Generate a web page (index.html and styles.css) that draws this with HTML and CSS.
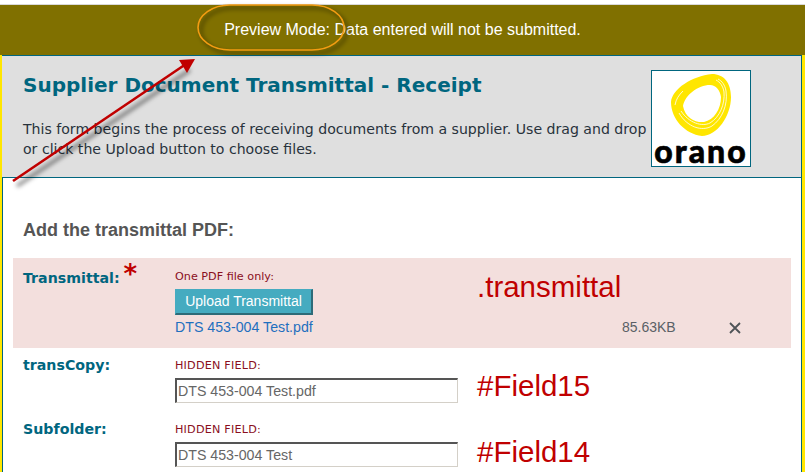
FILE: index.html
```html
<!DOCTYPE html>
<html lang="en">
<head>
  <meta charset="UTF-8">
  <title>Supplier Document Transmittal - Receipt</title>
  <link rel="stylesheet" href="styles.css">
</head>
<body>
  <div class="preview-bar">Preview Mode: Data entered will not be submitted.</div>
  <div class="form-wrap">
    <header class="form-header">
      <div class="header-text">
        <h1>Supplier Document Transmittal - Receipt</h1>
        <p>This form begins the process of receiving documents from a supplier. Use drag and drop or click the Upload button to choose files.</p>
      </div>
      <div class="logo">
        <svg class="logo-mark" viewBox="0 0 98 67" width="98" height="67">
          <path fill="#ffe600" fill-rule="evenodd" d="M19 31C20 18 40 5 60 3C72 3 79 12 79 26C79 45 65 65 50 65C33 63 19 48 19 31ZM31 35C33 47 44 52 52 51C62 49 69 38 69 26C68 19 64 14 58 14C46 14 33 24 31 35Z"/>
          <g fill="none" stroke="#fff" stroke-width=".8">
            <path d="M27 42C35 56 50 61 60 55C70 48 76 34 74 20C73 14 70 10 66 8"/>
            <path d="M29 40C37 52 50 56 58 52C68 46 73 33 72 21C71 15 68 11 64 9"/>
            <path d="M23 34C24 28 27 24 31 20"/>
          </g>
        </svg>
        <span class="logo-word">orano</span>
      </div>
    </header>

    <main class="form-body">
      <h2>Add the transmittal PDF:</h2>

      <div class="field-row transmittal">
        <div class="field-label">Transmittal:<span class="required">*</span></div>
        <div class="field-main">
          <div class="hint">One PDF file only:</div>
          <button class="upload-btn" type="button">Upload Transmittal</button>
          <div class="file-line">
            <a class="file-name" href="#">DTS 453-004 Test.pdf</a>
            <span class="file-size">85.63KB</span>
            <svg class="file-remove" viewBox="0 0 12 12" width="12" height="12" stroke="#4f5357" stroke-width="1.8" fill="none">
              <path d="M1 1L11 11M11 1L1 11"/>
            </svg>
          </div>
        </div>
      </div>

      <div class="field-row hidden-row">
        <div class="field-label">transCopy:</div>
        <div class="field-main">
          <div class="hint upper">HIDDEN FIELD:</div>
          <input class="text-input" type="text" value="DTS 453-004 Test.pdf">
        </div>
      </div>

      <div class="field-row hidden-row">
        <div class="field-label">Subfolder:</div>
        <div class="field-main">
          <div class="hint upper">HIDDEN FIELD:</div>
          <input class="text-input" type="text" value="DTS 453-004 Test">
        </div>
      </div>
    </main>
  </div>

  <!-- annotations drawn over the screenshot -->
  <div class="note note-transmittal">.transmittal</div>
  <div class="note note-field15">#Field15</div>
  <div class="note note-field14">#Field14</div>
  <svg class="markup" viewBox="0 0 805 472" width="805" height="472">
    <defs>
      <filter id="soft" x="-20%" y="-20%" width="140%" height="140%">
        <feGaussianBlur stdDeviation="2"/>
      </filter>
    </defs>
    <rect x="198" y="5" width="146" height="45" rx="32" ry="23" fill="none" stroke="#000" stroke-opacity=".35" stroke-width="3" filter="url(#soft)" transform="translate(3 3)"/>
    <rect x="198" y="5" width="146" height="45" rx="32" ry="23" fill="none" stroke="#f39c12" stroke-width="1.6"/>
    <path d="M17 186L190 70" stroke="#000" stroke-opacity=".45" stroke-width="3.5" filter="url(#soft)"/>
    <path d="M13 181L186 64" stroke="#c00000" stroke-width="2.6"/>
    <path d="M195 59L179 60L187 73Z" fill="#c00000"/>
  </svg>
</body>
</html>
```

FILE: styles.css
```css
* {
  box-sizing: border-box;
}

html, body {
  height: 472px;
  overflow: hidden;
}

body {
  margin: 0;
  background-color: #fff;
  font-family: "DejaVu Sans", Verdana, sans-serif;
  padding-top: 4px;
}

.preview-bar {
  height: 51px;
  padding-top: 15px;
  border-top: 1px solid #d9d9d9;
  background-color: #807000;
  color: #fff;
  font-family: "Liberation Sans", Arial, sans-serif;
  font-size: 16px;
  line-height: 19px;
  text-align: center;
}

.form-wrap {
  height: 417px;
  border-left: 2px solid #ffe600;
  border-right: 3px solid #ffe600;
  box-shadow: inset 1px 0 0 #00667f, inset -1px 0 0 #00667f;
}

.form-header {
  display: flex;
  justify-content: space-between;
  height: 123px;
  padding: 14px 50px 0 21px;
  background-color: #dfdfdf;
  border: 1px solid #00667f;
  border-width: 1px 1px 1px 0;
}

.header-text {
  width: 628px;
}

h1 {
  margin: 3px 0 0;
  color: #00667f;
  font-size: 20px;
  line-height: 24px;
}

.header-text p {
  margin: 22px 0 0;
  color: #28323c;
  font-size: 14.1px;
  line-height: 20px;
}

.logo {
  flex: none;
  width: 100px;
  height: 97px;
  background-color: #fff;
  border: 1px solid #00667f;
  text-align: center;
}

.logo-mark {
  display: block;
}

.logo-word {
  display: block;
  color: #000;
  font-family: "Lato", sans-serif;
  font-size: 32px;
  font-weight: 900;
  line-height: 26px;
  letter-spacing: 2px;
  -webkit-text-stroke: 0.6px #000;
}

.form-body {
  padding: 42px 0 0 11px;
}

h2 {
  margin: 0 0 18px 10px;
  color: #555;
  font-family: "Liberation Sans", Arial, sans-serif;
  font-size: 18px;
  font-weight: bold;
  line-height: 20px;
}

.field-row {
  display: flex;
  width: 778px;
  padding-left: 10px;
}

.transmittal {
  height: 90px;
  padding-top: 11px;
  background-color: #f3dfdd;
}

.transmittal .field-label {
  margin-top: -2px;
}

.hidden-row {
  height: 64px;
  padding-top: 10px;
}

.hidden-row .field-label {
  margin-top: -3px;
}

.field-label {
  flex: 0 0 152px;
  color: #00667f;
  font-size: 14.2px;
  font-weight: bold;
  line-height: 20px;
}

.required {
  margin-left: 4px;
  color: #c00000;
  font-size: 26px;
  line-height: 14px;
}

.field-main {
  flex: 1;
}

.hint {
  color: #8a0f1e;
  font-size: 11.2px;
  line-height: 16px;
}

.upper {
  height: 15px;
  letter-spacing: 0.2px;
}

.upload-btn {
  display: block;
  width: 138px;
  height: 26px;
  margin: 4px 0 0;
  padding: 0 0 1px;
  background-color: #45abc0;
  color: #fff;
  border: 1px solid #45abc0;
  border-right: 2px solid #2d6b78;
  border-bottom: 2px solid #2d6b78;
  font-family: "Liberation Sans", Arial, sans-serif;
  font-size: 14px;
}

.file-line {
  display: flex;
  align-items: center;
  height: 18px;
  margin-top: 3px;
}

.file-name {
  width: 447px;
  color: #1f6fbf;
  font-family: "Liberation Sans", Arial, sans-serif;
  font-size: 14.2px;
  text-decoration: none;
}

.file-size {
  width: 107px;
  color: #5a5f66;
  font-family: "Liberation Sans", Arial, sans-serif;
  font-size: 14px;
}

.file-remove {
  margin-top: 2px;
}

.text-input {
  display: block;
  width: 283px;
  height: 25px;
  margin-top: 5px;
  padding: 0 1px;
  background-color: #fff;
  color: #666;
  border: 1px solid #d4d0c8;
  border-top: 2px solid #555;
  border-left: 2px solid #555;
  font-family: "Liberation Sans", Arial, sans-serif;
  font-size: 14.2px;
}

.note {
  position: absolute;
  left: 477px;
  color: #c00000;
  font-family: "Liberation Sans", Arial, sans-serif;
  font-size: 29.5px;
  line-height: 32px;
}

.note-transmittal {
  top: 271px;
}

.note-field15 {
  top: 370px;
}

.note-field14 {
  top: 436px;
}

.markup {
  position: absolute;
  top: 0;
  left: 0;
  pointer-events: none;
}
```
